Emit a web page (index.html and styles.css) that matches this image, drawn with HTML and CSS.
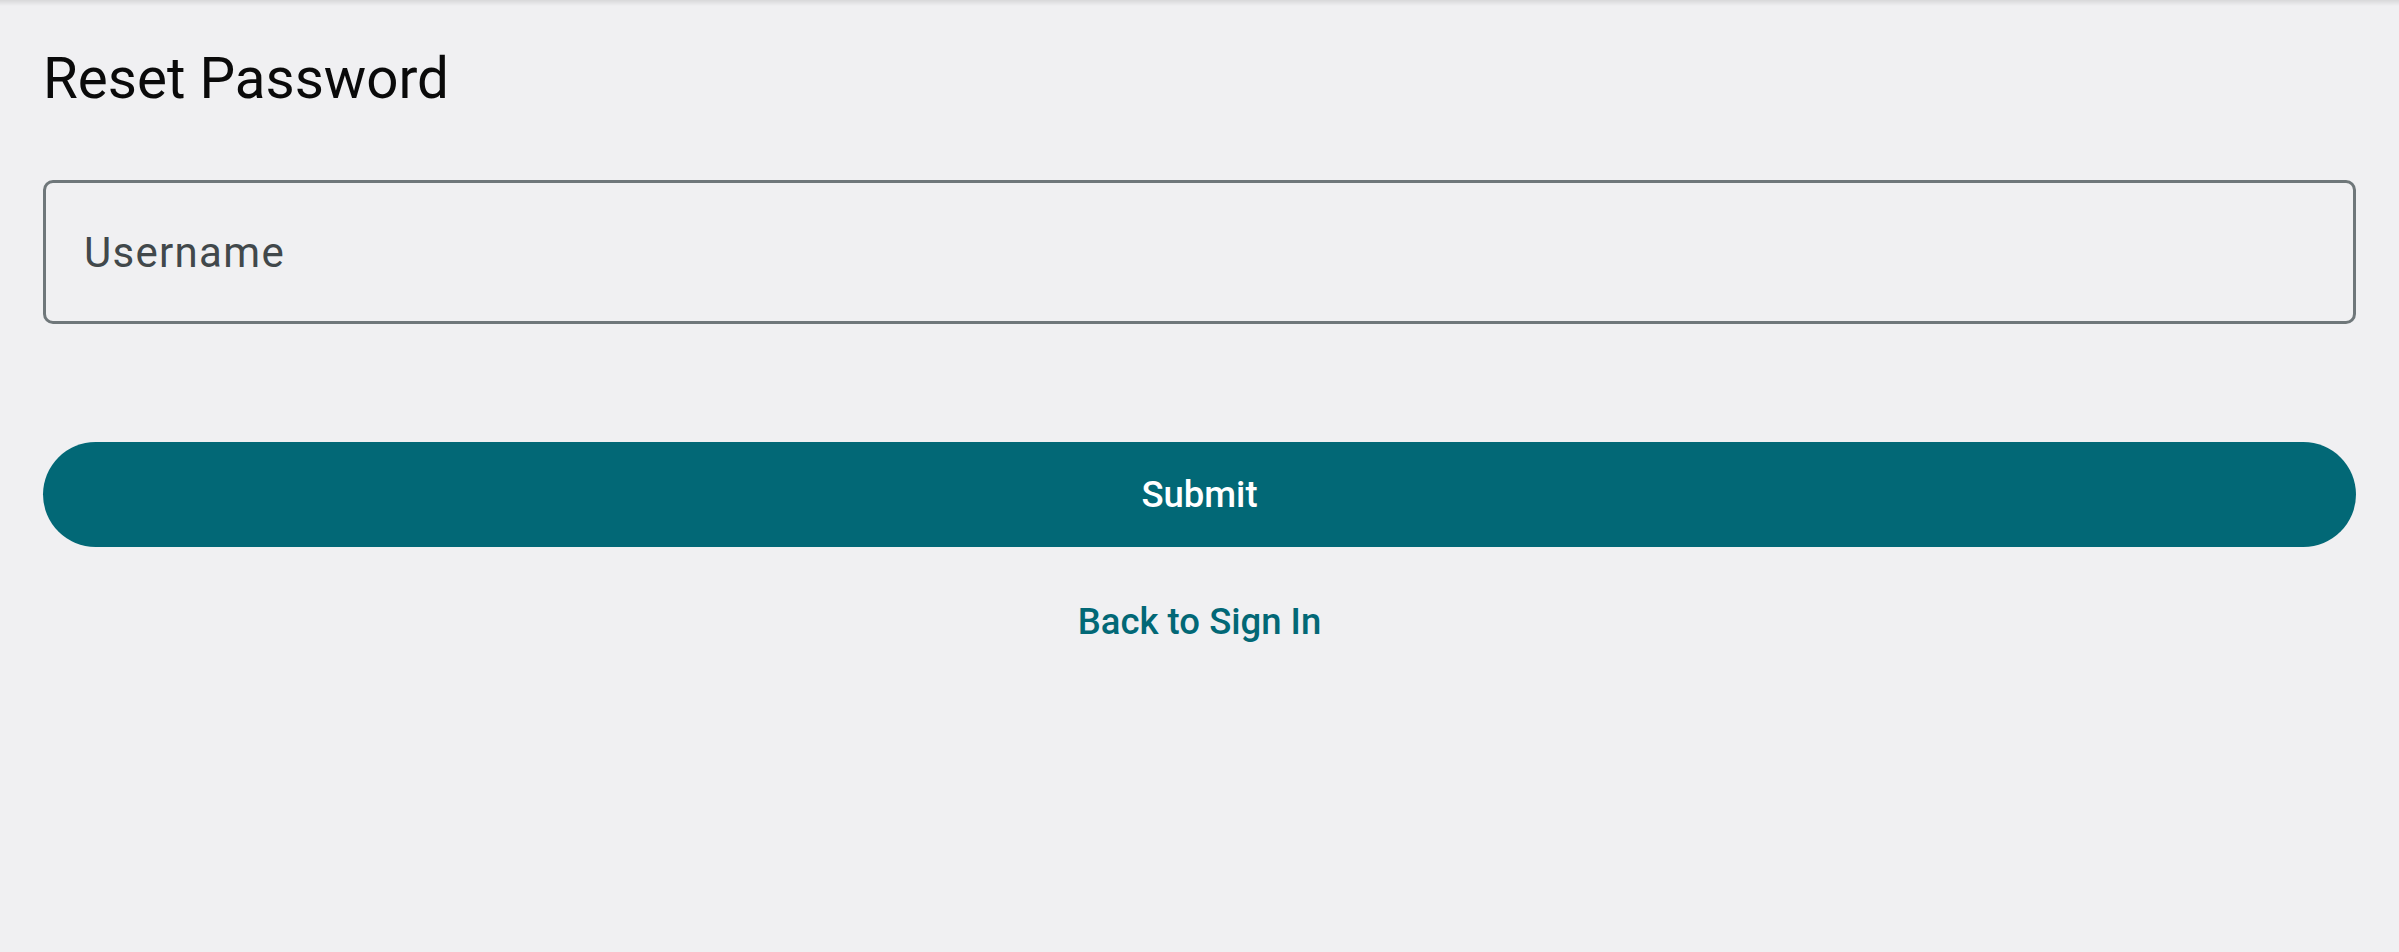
FILE: index.html
```html
<!DOCTYPE html>
<html lang="en">
<head>
<meta charset="utf-8">
<title>Reset Password</title>
<link rel="stylesheet" href="styles.css">
</head>
<body>
<div class="topshadow"></div>
<main class="page">
  <h1 class="title">Reset Password</h1>
  <div class="field">
    <span class="field-label">Username</span>
  </div>
  <button class="submit" type="button">Submit</button>
  <a class="back" href="#">Back to Sign In</a>
</main>
</body>
</html>
```

FILE: styles.css
```css
html, body {
  margin: 0;
  padding: 0;
  background: #f0f0f2;
  height: 100%;
}
body {
  font-family: Roboto, "Noto Sans", "Liberation Sans", sans-serif;
  overflow: hidden;
}
.topshadow {
  height: 6px;
  background: linear-gradient(to bottom, rgba(0,0,0,0.10), rgba(0,0,0,0));
}
.page {
  display: flex;
  flex-direction: column;
  padding: 39px 43px 0 43px;
}
.title {
  margin: 0;
  font-size: 56.5px;
  line-height: 68px;
  font-weight: 400;
  color: #0a0a0a;
}
.field {
  margin-top: 67px;
  height: 144px;
  box-sizing: border-box;
  border: 3px solid #6f777a;
  border-radius: 10px;
  display: flex;
  align-items: center;
  padding-left: 38px;
}
.field-label {
  font-size: 42px;
  letter-spacing: 1.3px;
  color: #41484b;
}
.submit {
  margin-top: 118px;
  height: 105px;
  border: none;
  border-radius: 53px;
  background: #026876;
  color: #ffffff;
  font-family: inherit;
  font-size: 36.5px;
  font-weight: 500;
  padding: 0;
  cursor: pointer;
}
.back {
  align-self: center;
  margin-top: 53px;
  font-size: 36.5px;
  font-weight: 500;
  color: #026876;
  text-decoration: none;
  line-height: normal;
}
```
